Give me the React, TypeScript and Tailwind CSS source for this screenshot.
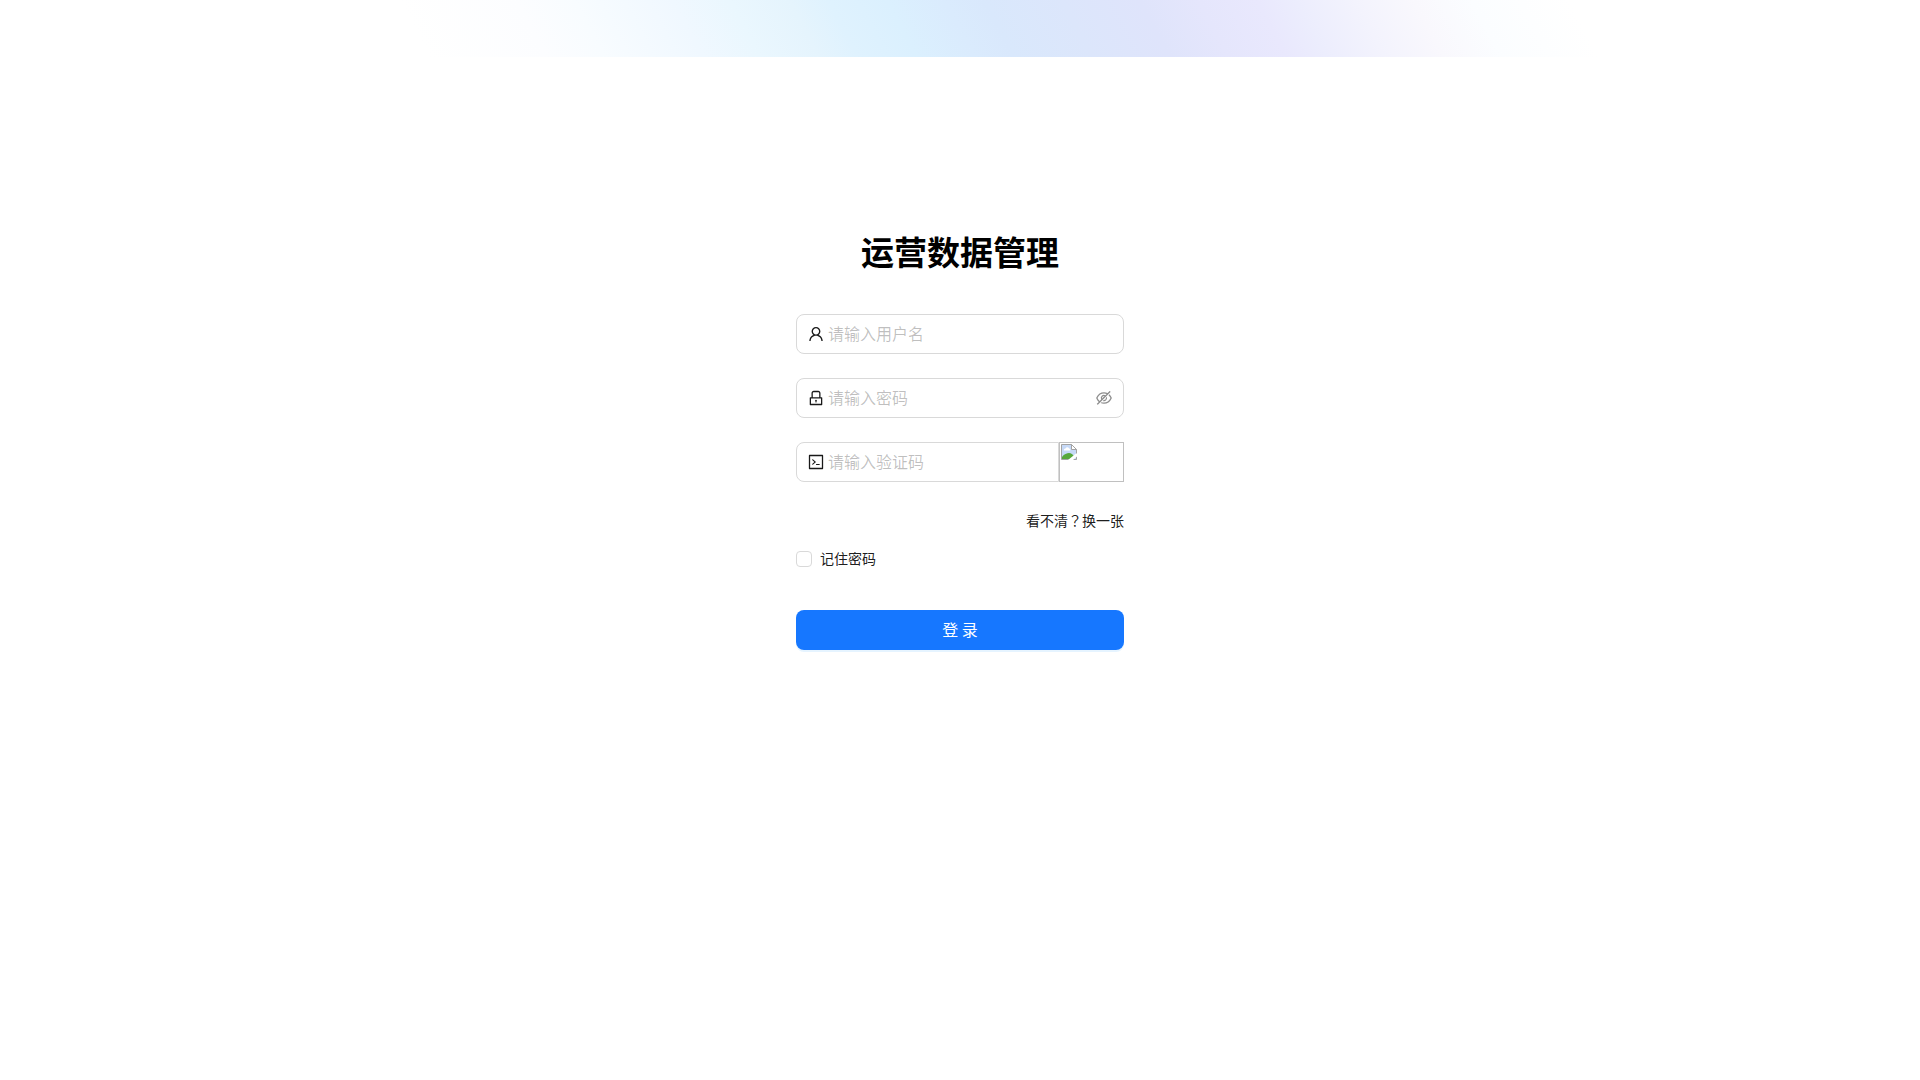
import { useState } from "react";
import type { ReactNode } from "react";
import {
  AiOutlineCode,
  AiOutlineEyeInvisible,
  AiOutlineLock,
  AiOutlineUser,
} from "react-icons/ai";

const ICON_BOX = "64 64 896 896";

type FieldProps = {
  id: string;
  label: string;
  placeholder: string;
  type?: string;
  icon: ReactNode;
  suffix?: ReactNode;
  className?: string;
};

function Field({ id, label, placeholder, type = "text", icon, suffix, className = "rounded-lg" }: FieldProps) {
  return (
    <div className={`flex h-10 min-w-0 flex-1 items-center gap-1 border border-[#d9d9d9] bg-white px-[11px] ${className}`}>
      <label htmlFor={id} aria-label={label} className="shrink-0 text-base text-black/90">
        {icon}
      </label>
      <input
        id={id}
        type={type}
        placeholder={placeholder}
        className="min-w-0 flex-1 bg-transparent pb-0.5 text-base leading-6 outline-none placeholder:text-black/25"
      />
      {suffix}
    </div>
  );
}

function MissingPicture() {
  return (
    <svg width="16" height="16" viewBox="0 0 16 16" aria-hidden="true">
      <path d="M.5.5h10l5 5v10H.5z" fill="#c6d9f7" stroke="#a3a3a3" />
      <path d="M3 6.5a1.5 1.5 0 0 1 1.500-2 2 2 0 0 1 3.600 0 1.200 1.200 0 0 1 1 2z" fill="#fff" />
      <path d="M1 15v-2c2-3 5-4 7-4s4 1.500 5 3l-2 3z" fill="#57a83c" />
      <path d="M10.500.5v5h5z" fill="#fff" stroke="#a3a3a3" />
      <path d="M7 16l8-6.500h1v3L12 16z" fill="#fff" />
    </svg>
  );
}

export default function App() {
  const [visible, setVisible] = useState(false);

  return (
    <div className="min-h-screen bg-white font-['Noto_Sans_CJK_SC',sans-serif] text-sm text-black/90">
      <header className="h-[57px] bg-[linear-gradient(62deg,#ffffff_22%,#fcfdff_28%,#f8fcff_31%,#f0f8ff_36%,#eaf7fe_39%,#e5f4fd_42%,#dff2fe_44%,#dbf0fe_47%,#daebfd_50%,#d9e8fc_52%,#dce6fb_56%,#dfe4fb_60%,#e5e6fc_63%,#e9e8fd_66%,#ecedfd_68%,#f3f3fd_71%,#f9f8fd_74%,#fbfdff_77%,#ffffff_82%)]" />
      <main className="flex flex-col items-center px-4 pt-[166px]">
        <form className="w-full max-w-[328px]" onSubmit={(e) => e.preventDefault()}>
          <h1 className="text-center text-[33px] font-bold leading-[56px] text-black">运营数据管理</h1>
          <div className="mt-[35px] flex flex-col gap-6">
            <div className="flex">
              <Field
                id="username"
                label="用户名"
                placeholder="请输入用户名"
                icon={<AiOutlineUser viewBox={ICON_BOX} />}
              />
            </div>
            <div className="flex">
              <Field
                id="password"
                label="密码"
                placeholder="请输入密码"
                type={visible ? "text" : "password"}
                icon={<AiOutlineLock viewBox={ICON_BOX} />}
                suffix={
                  <button
                    type="button"
                    aria-label="显示密码"
                    className="text-base text-black/45"
                    onClick={() => setVisible(!visible)}
                  >
                    <AiOutlineEyeInvisible viewBox={ICON_BOX} />
                  </button>
                }
              />
            </div>
            <div className="flex">
              <Field
                id="captcha"
                label="验证码"
                placeholder="请输入验证码"
                icon={<AiOutlineCode viewBox={ICON_BOX} />}
                className="rounded-l-lg"
              />
              <button
                type="button"
                aria-label="验证码图片"
                className="flex h-10 w-[65px] shrink-0 items-start border border-[#c0c0c0] p-px"
              >
                <MissingPicture />
              </button>
            </div>
          </div>
          <div className="mt-[27px] flex justify-end leading-[22px]">
            <a href="#captcha">
              看不清<span className="font-['Noto_Sans_CJK_TC',sans-serif]">？</span>换一张
            </a>
          </div>
          <label className="mt-4 flex items-center gap-2 leading-[22px]">
            <input
              type="checkbox"
              className="size-4 appearance-none rounded border border-[#d9d9d9] bg-white checked:border-[#1677ff] checked:bg-[#1677ff]"
            />
            <span className="pb-px">记住密码</span>
          </label>
          <button
            type="submit"
            className="mt-10 h-10 w-full rounded-lg bg-[#1677ff] pb-0.5 text-base text-white shadow-[0_2px_0_rgba(5,145,255,0.1)]"
          >
            登 录
          </button>
        </form>
      </main>
    </div>
  );
}
